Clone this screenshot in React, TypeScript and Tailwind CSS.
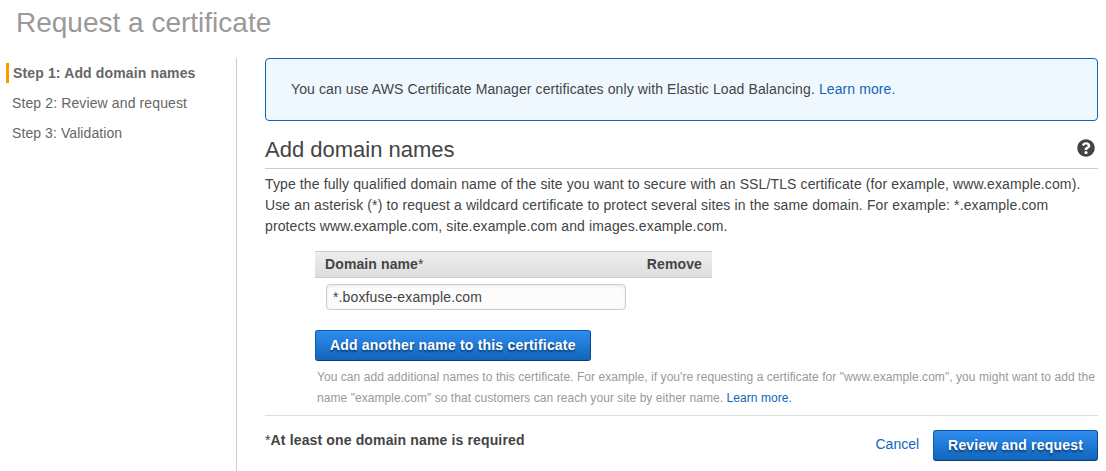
import React from "react";
import { FaQuestionCircle } from "react-icons/fa";

function PrimaryButton({ children }: { children: React.ReactNode }) {
  return (
    <button className="h-[31px] shrink-0 rounded-[3px] border border-[#0f59a8] border-b-[#083c74] border-r-[#0a4788] bg-linear-to-b from-[#2e8df0] to-[#1166bb] px-[14px] text-[14px] leading-[29px] font-bold tracking-[0.19px] whitespace-nowrap text-white [text-shadow:0_2px_2px_#0a3c75]">
      {children}
    </button>
  );
}

function Sidebar() {
  return (
    <nav className="h-[413px] w-[237px] shrink-0 border-r border-[#ccc] pt-[5px] pl-1.5 text-[14px] leading-5 text-[#666]">
      <div className="border-l-[3px] border-[#ff9900] pl-1 font-bold tracking-[0.14px]">Step 1: Add domain names</div>
      <div className="mt-2.5 pl-1.5 tracking-[0.12px]">Step 2: Review and request</div>
      <div className="mt-2.5 pl-1.5 tracking-[0.08px]">Step 3: Validation</div>
    </nav>
  );
}

export default function App() {
  return (
    <div className="h-[471px] w-[1106px] overflow-hidden bg-white font-['Liberation_Sans',Arial,sans-serif] text-[14px] text-[#444]">
      <h1 className="h-[58px] pt-[5px] pl-4 text-[28px] leading-9 text-[#999]">Request a certificate</h1>
      <div className="flex">
        <Sidebar />
        <main className="ml-7 w-[833px]">
          <div className="h-[63px] rounded-[4px] border border-[#1166bb] bg-[#f0f8ff] pl-[25px] leading-[61px] tracking-[0.1px]">
            You can use AWS Certificate Manager certificates only with Elastic Load Balancing.{" "}
            <a className="text-[#1166bb]">Learn more.</a>
          </div>
          <div className="flex h-12 justify-between border-b border-[#ccc] pt-[13px]">
            <h2 className="pt-px text-[22px] leading-[30px]">Add domain names</h2>
            <FaQuestionCircle className="mt-[5px] mr-[3px] size-[18px] text-[#444]" />
          </div>
          <p className="pt-[5px] leading-[21px] tracking-[0.122px] whitespace-nowrap">
            Type the fully qualified domain name of the site you want to secure with an SSL/TLS certificate (for example, www.example.com).
            <br />
            Use an asterisk (*) to request a wildcard certificate to protect several sites in the same domain. For example: *.example.com
            <br />
            protects www.example.com, site.example.com and images.example.com.
          </p>
          <section className="pt-[14px] pl-[50px]">
            <div className="flex h-[27px] w-[397px] justify-between border-y border-[#ccc] bg-linear-to-b from-[#eee] to-[#ddd] px-2.5 leading-[25px] font-bold tracking-[0.11px]">
              <span>Domain name<span className="font-normal">*</span></span>
              <span>Remove</span>
            </div>
            <input
              className="mt-1.5 ml-[11px] block h-[26px] w-[300px] rounded-[4px] border border-[#ccc] bg-[#fcfcfc] px-1.5 text-[14px] tracking-[0.13px] shadow-[inset_0_1px_3px_#e8e8e8] outline-none"
              defaultValue="*.boxfuse-example.com"
            />
            <div className="mt-5 flex">
              <PrimaryButton>Add another name to this certificate</PrimaryButton>
            </div>
            <p className="mt-[6px] pl-0.5 text-[12px] leading-[21px] tracking-[0.058px] whitespace-nowrap text-[#999]">
              You can add additional names to this certificate. For example, if you're requesting a certificate for "www.example.com", you might want to add the
              <br />
              name "example.com" so that customers can reach your site by either name. <a className="text-[#1166bb]">Learn more.</a>
            </p>
          </section>
          <footer className="mt-[6px] flex border-t border-[#ddd] pt-[14px]">
            <div className="grow leading-5 font-bold tracking-[0.14px]"><span className="font-normal">*</span>At least one domain name is required</div>
            <a className="mr-[14px] leading-7 text-[#1166bb]">Cancel</a>
            <PrimaryButton>Review and request</PrimaryButton>
          </footer>
        </main>
      </div>
    </div>
  );
}
